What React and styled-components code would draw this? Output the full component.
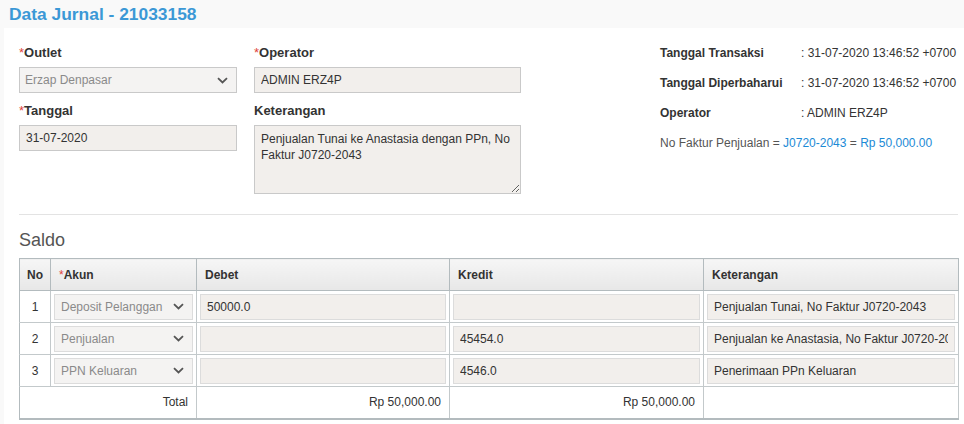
import React from "react";
import styled, { createGlobalStyle } from "styled-components";

const Global = createGlobalStyle`
  html, body { margin: 0; padding: 0; background: #f9f9f9; }
  body { font-family: "Liberation Sans", Arial, sans-serif; color: #333; font-size: 12px; }
  * { box-sizing: border-box; }
`;

const Page = styled.div`
  width: 964px;
  height: 424px;
  overflow: hidden;
`;

const Title = styled.h1`
  margin: 0;
  padding: 4px 0 0 9px;
  height: 28px;
  font-size: 17.4px;
  font-weight: bold;
  color: #3b98d6;
`;

const Panel = styled.div`
  margin-left: 4px;
  background: #fff;
  padding: 17px 6px 20px 15px;
`;

const Top = styled.div`
  display: flex;
  align-items: flex-start;
`;

const FormGrid = styled.div`
  display: grid;
  grid-template-columns: 218px 267px;
  column-gap: 17px;
  row-gap: 10px;
`;

const Field = styled.div`
  display: flex;
  flex-direction: column;
  gap: 6px;
`;

const Label = styled.label`
  font-size: 13px;
  font-weight: bold;
  color: #333;
  line-height: 16px;
`;

const Req = styled.span`
  color: #e0443a;
  font-weight: normal;
`;

const Box = styled.div`
  height: ${(p) => (p.$h ? p.$h : 26)}px;
  display: flex;
  align-items: center;
  justify-content: space-between;
  background: ${(p) => (p.$muted ? "#f4f3f2" : "#f2efec")};
  border: 1px solid ${(p) => (p.$light ? "#dcdcdc" : "#c9c9c9")};
  padding: 0 8px 0 ${(p) => (p.$light ? 6 : 5)}px;
  color: ${(p) => (p.$muted ? "#8a8a8a" : "#333")};
  font-size: 12px;
  white-space: nowrap;
  overflow: hidden;
`;

const TextInput = styled.input`
  width: 100%;
  height: 26px;
  background: #f2efec;
  border: 1px solid ${(p) => (p.$light ? "#dcdcdc" : "#c9c9c9")};
  padding: 0 6px;
  color: #333;
  font-family: "Liberation Sans", Arial, sans-serif;
  font-size: 12px;
  outline: none;
  border-radius: 0;
`;

const TextArea = styled.textarea`
  width: 267px;
  height: 69px;
  background: #f2efec;
  border: 1px solid #c9c9c9;
  padding: 5px 6px;
  color: #333;
  font-family: "Liberation Sans", Arial, sans-serif;
  font-size: 12px;
  line-height: 16px;
  outline: none;
  border-radius: 0;
`;

const Info = styled.div`
  margin-left: 139px;
  padding-top: 0;
  display: flex;
  flex-direction: column;
  gap: 14px;
`;

const InfoRow = styled.div`
  display: flex;
  font-size: 12px;
  line-height: 16px;
  white-space: nowrap;
`;

const InfoKey = styled.span`
  width: 141px;
  font-weight: bold;
  color: #333;
`;

const InfoVal = styled.span`
  color: #333;
`;

const Faktur = styled.div`
  font-size: 12px;
  line-height: 16px;
  color: #555;
  white-space: nowrap;
`;

const Blue = styled.span`
  color: #1b8ad6;
`;

const Divider = styled.hr`
  border: 0;
  border-top: 1px solid #e3e3e3;
  margin: 20px 0 0;
`;

const SectionTitle = styled.h2`
  margin: 15px 0 8px;
  font-size: 18px;
  font-weight: normal;
  color: #555;
  line-height: 20px;
`;

const Table = styled.table`
  width: 939px;
  border-collapse: collapse;
  table-layout: fixed;
  border-bottom: 2px solid #b3bbbe;
`;

const Th = styled.th`
  height: 32px;
  text-align: ${(p) => (p.$center ? "center" : "left")};
  padding: 0 ${(p) => (p.$center ? 0 : 8)}px;
  font-size: 12px;
  font-weight: bold;
  color: #333;
  border: 1px solid #b3bbbe;
  background: linear-gradient(#f6f6f6, #e7e7e7);
`;

const Td = styled.td`
  height: 32px;
  padding: ${(p) => (p.$text ? "0 8px" : "0 3px")};
  text-align: ${(p) => p.$align || "left"};
  font-size: 12px;
  color: #333;
  border: 1px solid #c3c9cb;
  border-left-color: ${(p) => (p.$outer ? "#b3bbbe" : "#c3c9cb")};
`;

const Chevron = () => (
  <svg width="11" height="7" viewBox="0 0 11 7" fill="none">
    <path d="M1 1.2 L5.5 5.5 L10 1.2" stroke="#555" strokeWidth="1.8" />
  </svg>
);

const Select = ({ value, light, h }) => (
  <Box $muted $light={light} $h={h}>
    <span>{value}</span>
    <Chevron />
  </Box>
);

const rows = [
  { no: 1, akun: "Deposit Pelanggan", debet: "50000.0", kredit: "", ket: "Penjualan Tunai, No Faktur J0720-2043" },
  { no: 2, akun: "Penjualan", debet: "", kredit: "45454.0", ket: "Penjualan ke Anastasia, No Faktur J0720-2043" },
  { no: 3, akun: "PPN Keluaran", debet: "", kredit: "4546.0", ket: "Penerimaan PPn Keluaran" },
];

export default function App() {
  return (
    <Page>
      <Global />
      <Title>Data Jurnal - 21033158</Title>
      <Panel>
        <Top>
          <FormGrid>
            <Field>
              <Label><Req>*</Req>Outlet</Label>
              <Select value="Erzap Denpasar" />
            </Field>
            <Field>
              <Label><Req>*</Req>Operator</Label>
              <TextInput readOnly value="ADMIN ERZ4P" />
            </Field>
            <Field>
              <Label><Req>*</Req>Tanggal</Label>
              <TextInput readOnly value="31-07-2020" />
            </Field>
            <Field>
              <Label>Keterangan</Label>
              <TextArea readOnly value="Penjualan Tunai ke Anastasia dengan PPn, No Faktur J0720-2043" />
            </Field>
          </FormGrid>
          <Info>
            <InfoRow><InfoKey>Tanggal Transaksi</InfoKey><InfoVal>: 31-07-2020 13:46:52 +0700</InfoVal></InfoRow>
            <InfoRow><InfoKey>Tanggal Diperbaharui</InfoKey><InfoVal>: 31-07-2020 13:46:52 +0700</InfoVal></InfoRow>
            <InfoRow><InfoKey>Operator</InfoKey><InfoVal>: ADMIN ERZ4P</InfoVal></InfoRow>
            <Faktur>No Faktur Penjualan = <Blue>J0720-2043</Blue> = <Blue>Rp 50,000.00</Blue></Faktur>
          </Info>
        </Top>
        <Divider />
        <SectionTitle>Saldo</SectionTitle>
        <Table>
          <colgroup>
            <col style={{ width: 31 }} />
            <col style={{ width: 146 }} />
            <col style={{ width: 253 }} />
            <col style={{ width: 254 }} />
            <col style={{ width: 255 }} />
          </colgroup>
          <thead>
            <tr>
              <Th $center>No</Th>
              <Th><Req>*</Req>Akun</Th>
              <Th>Debet</Th>
              <Th>Kredit</Th>
              <Th>Keterangan</Th>
            </tr>
          </thead>
          <tbody>
            {rows.map((r) => (
              <tr key={r.no}>
                <Td $align="center" $outer>{r.no}</Td>
                <Td><Select value={r.akun} light /></Td>
                <Td><TextInput $light readOnly value={r.debet} /></Td>
                <Td><TextInput $light readOnly value={r.kredit} /></Td>
                <Td><TextInput $light readOnly value={r.ket} /></Td>
              </tr>
            ))}
            <tr>
              <Td colSpan={2} $text $align="right" $outer>Total</Td>
              <Td $text $align="right">Rp 50,000.00</Td>
              <Td $text $align="right">Rp 50,000.00</Td>
              <Td />
            </tr>
          </tbody>
        </Table>
      </Panel>
    </Page>
  );
}
